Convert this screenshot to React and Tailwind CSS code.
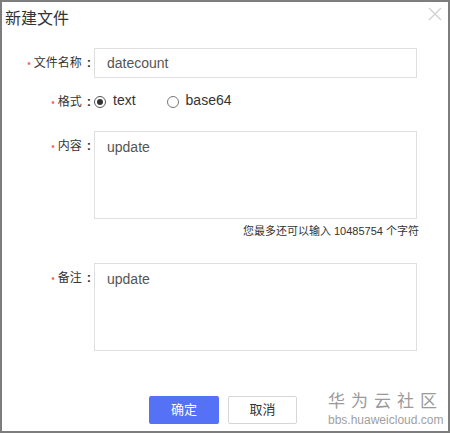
export default function App() {
  const cjk = { fontFamily: '"Liberation Sans", "Noto Sans CJK SC", sans-serif' };
  const Label = ({ children }) => (
    <div className="w-[92px] shrink-0 flex justify-end items-center pr-[3px] text-[12px] text-[#333] h-[30px]">
      <span className="text-[#f36b6b] mr-[3px] text-[10px]">•</span>
      <span>{children}</span>
      <span className="ml-[5px] text-[13px] font-bold">:</span>
    </div>
  );
  return (
    <div style={cjk} className="w-[450px] h-[433px] border-2 border-[#7d7d7d] bg-white relative flex flex-col">
      <div className="flex items-start justify-between h-[46px]">
        <div className="text-[16px] text-[#333] pl-[3px] pt-[5px] leading-[24px]">新建文件</div>
        <svg className="mr-[6px] mt-[5px]" width="14" height="14" viewBox="0 0 14 14">
          <path d="M1 1 L13 13 M13 1 L1 13" stroke="#d0d0d0" strokeWidth="1.2" />
        </svg>
      </div>
      <div className="flex">
        <Label>文件名称</Label>
        <div className="w-[323px] h-[30px] border border-[#dfdfdf] flex items-center pl-[12px] text-[14px] text-[#555]">datecount</div>
      </div>
      <div className="flex mt-[9px] h-[30px] items-center">
        <Label>格式</Label>
        <div className="flex items-center text-[14px] text-[#333]">
          <span className="w-[12px] h-[12px] rounded-full border border-[#555] flex items-center justify-center">
            <span className="w-[6px] h-[6px] rounded-full bg-[#333]"></span>
          </span>
          <span className="ml-[7px] -mt-[4px]">text</span>
          <span className="ml-[31px] w-[12px] h-[12px] rounded-full border border-[#777]"></span>
          <span className="ml-[7px] -mt-[4px]">base64</span>
        </div>
      </div>
      <div className="flex mt-[14px]">
        <Label>内容</Label>
        <div className="w-[323px] h-[88px] border border-[#dfdfdf] pl-[12px] pt-[5px] text-[14px] text-[#555]">update</div>
      </div>
      <div className="w-[417px] text-right text-[11px] text-[#333] mt-[4px] leading-[16px]">您最多还可以输入 10485754 个字符</div>
      <div className="flex mt-[24px]">
        <Label>备注</Label>
        <div className="w-[323px] h-[88px] border border-[#dfdfdf] pl-[12px] pt-[5px] text-[14px] text-[#555]">update</div>
      </div>
      <div className="flex mt-[45px] items-start">
        <div className="shrink-0 ml-[147px] w-[70px] h-[28px] rounded-[2px] bg-[#5571f6] text-white text-[13px] flex items-center justify-center">确定</div>
        <div className="shrink-0 ml-[9px] w-[69px] h-[28px] rounded-[2px] border border-[#d6d6d6] text-[#333] text-[13px] flex items-center justify-center">取消</div>
        <div className="shrink-0 ml-[31px] flex flex-col items-start -mt-[6px]">
          <div className="text-[17px] text-[#9a9a9a] tracking-[6px] leading-[24px]">华为云社区</div>
          <div className="text-[12px] text-[#a0a0a0] leading-[12px]">bbs.huaweicloud.com</div>
        </div>
      </div>
    </div>
  );
}
